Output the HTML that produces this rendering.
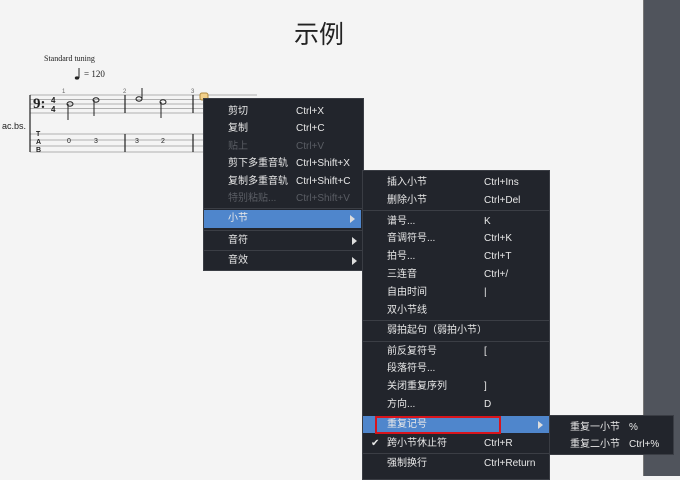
<!DOCTYPE html>
<html><head><meta charset="utf-8"><style>
*{margin:0;padding:0;box-sizing:border-box}
body{width:680px;height:476px;background:#f4f4f4;position:relative;overflow:hidden;font-family:"Liberation Sans","Noto Sans CJK SC",sans-serif}
.panel{position:absolute;left:643px;top:0;width:37px;height:476px;background:#50545c;border-left:1px solid #777}
.title{position:absolute;left:294px;top:15px;font-size:25px;color:#222;font-family:"Noto Sans CJK SC",sans-serif}
.menu{position:absolute;background:#22252c;border:1px solid #3a3d44;color:#e8e8e8;font-size:10px}
.it{position:absolute;height:17px;line-height:17px;left:0;right:0}
.it .a{position:absolute}
.it .b{position:absolute}
.dis{color:#5a5d64}
.hl{background:#4f86cc}
.sep{position:absolute;left:0;right:0;height:1px;background:#3b3e45}
.arr{position:absolute;right:6px;top:5px;width:0;height:0;border-left:5px solid #ddd;border-top:4px solid transparent;border-bottom:4px solid transparent}
</style></head><body>
<div class="panel"></div>
<div class="title">示例</div>
<svg style="position:absolute;left:0;top:0" width="643" height="476">
<text x="44" y="61" font-family="Liberation Serif" font-size="8" fill="#222">Standard tuning</text>
<ellipse cx="77" cy="78" rx="2.2" ry="1.6" fill="#222"/><line x1="79" y1="78" x2="79" y2="68" stroke="#222"/>
<text x="84" y="77" font-family="Liberation Serif" font-size="9" fill="#222">= 120</text>
<g stroke="#999" stroke-width="0.8">
<line x1="30" y1="95" x2="257" y2="95"/><line x1="30" y1="99.5" x2="257" y2="99.5"/><line x1="30" y1="104" x2="257" y2="104"/><line x1="30" y1="108.5" x2="257" y2="108.5"/><line x1="30" y1="113" x2="257" y2="113"/>
<line x1="30" y1="134" x2="257" y2="134"/><line x1="30" y1="140" x2="257" y2="140"/><line x1="30" y1="146" x2="257" y2="146"/><line x1="30" y1="152" x2="257" y2="152"/>
</g>
<g stroke="#222" stroke-width="1.2">
<line x1="30" y1="95" x2="30" y2="152"/><line x1="125" y1="95" x2="125" y2="113"/><line x1="193" y1="95" x2="193" y2="113"/>
<line x1="125" y1="134" x2="125" y2="152"/><line x1="193" y1="134" x2="193" y2="152"/>
</g>
<text x="33" y="108" font-size="15" font-weight="bold" font-family="Liberation Serif" fill="#222">9:</text>
<text x="51" y="103" font-size="8" font-weight="bold" fill="#222">4</text><text x="51" y="112" font-size="8" font-weight="bold" fill="#222">4</text>
<text x="2" y="129" font-size="9" fill="#222">ac.bs.</text>
<text x="62" y="93" font-size="6" fill="#666">1</text><text x="123" y="93" font-size="6" fill="#666">2</text><text x="191" y="93" font-size="6" fill="#666">3</text>
<g fill="none" stroke="#222"><ellipse cx="70" cy="104" rx="3" ry="2.2"/><line x1="68" y1="104" x2="68" y2="120"/>
<ellipse cx="96" cy="100" rx="3" ry="2.2"/><line x1="94" y1="100" x2="94" y2="116"/>
<ellipse cx="139" cy="99" rx="3" ry="2.2"/><line x1="142" y1="99" x2="142" y2="88"/>
<ellipse cx="163" cy="102" rx="3" ry="2.2"/><line x1="161" y1="102" x2="161" y2="118"/></g>
<g font-size="7" fill="#222"><text x="67" y="143">0</text><text x="94" y="143">3</text><text x="135" y="143">3</text><text x="161" y="143">2</text>
<text x="36" y="136" font-weight="bold">T</text><text x="36" y="144" font-weight="bold">A</text><text x="36" y="152" font-weight="bold">B</text></g>
<rect x="200" y="93" width="8" height="7" rx="2" fill="#f2d08a" stroke="#b08a40"/>
</svg>

<div class="menu" style="left:203px;top:98px;width:161px;height:173px">
<div class="it" style="top:4px"><span class="a" style="left:24px">剪切</span><span class="b" style="left:92px">Ctrl+X</span></div>
<div class="it" style="top:21px"><span class="a" style="left:24px">复制</span><span class="b" style="left:92px">Ctrl+C</span></div>
<div class="it dis" style="top:39px"><span class="a" style="left:24px">贴上</span><span class="b" style="left:92px">Ctrl+V</span></div>
<div class="it" style="top:56px"><span class="a" style="left:24px">剪下多重音轨</span><span class="b" style="left:92px">Ctrl+Shift+X</span></div>
<div class="it" style="top:74px"><span class="a" style="left:24px">复制多重音轨</span><span class="b" style="left:92px">Ctrl+Shift+C</span></div>
<div class="it dis" style="top:91px"><span class="a" style="left:24px">特别粘贴...</span><span class="b" style="left:92px">Ctrl+Shift+V</span></div>
<div class="sep" style="top:109px"></div>
<div class="it hl" style="top:111px;height:18px;right:2px"><span class="a" style="left:24px">小节</span><span class="arr"></span></div>
<div class="sep" style="top:131px"></div>
<div class="it" style="top:133px"><span class="a" style="left:24px">音符</span><span class="arr"></span></div>
<div class="sep" style="top:151px"></div>
<div class="it" style="top:153px"><span class="a" style="left:24px">音效</span><span class="arr"></span></div>
</div>

<div class="menu" style="left:362px;top:170px;width:188px;height:310px">
<div class="it" style="top:3px"><span class="a" style="left:24px">插入小节</span><span class="b" style="left:121px">Ctrl+Ins</span></div>
<div class="it" style="top:21px"><span class="a" style="left:24px">删除小节</span><span class="b" style="left:121px">Ctrl+Del</span></div>
<div class="sep" style="top:39px"></div>
<div class="it" style="top:42px"><span class="a" style="left:24px">谱号...</span><span class="b" style="left:121px">K</span></div>
<div class="it" style="top:59px"><span class="a" style="left:24px">音调符号...</span><span class="b" style="left:121px">Ctrl+K</span></div>
<div class="it" style="top:77px"><span class="a" style="left:24px">拍号...</span><span class="b" style="left:121px">Ctrl+T</span></div>
<div class="it" style="top:95px"><span class="a" style="left:24px">三连音</span><span class="b" style="left:121px">Ctrl+/</span></div>
<div class="it" style="top:113px"><span class="a" style="left:24px">自由时间</span><span class="b" style="left:121px">|</span></div>
<div class="it" style="top:131px"><span class="a" style="left:24px">双小节线</span></div>
<div class="sep" style="top:149px"></div>
<div class="it" style="top:151px"><span class="a" style="left:24px">弱拍起句（弱拍小节）</span></div>
<div class="sep" style="top:170px"></div>
<div class="it" style="top:172px"><span class="a" style="left:24px">前反复符号</span><span class="b" style="left:121px">[</span></div>
<div class="it" style="top:189px"><span class="a" style="left:24px">段落符号...</span></div>
<div class="it" style="top:207px"><span class="a" style="left:24px">关闭重复序列</span><span class="b" style="left:121px">]</span></div>
<div class="it" style="top:225px"><span class="a" style="left:24px">方向...</span><span class="b" style="left:121px">D</span></div>
<div class="it hl" style="top:245px;height:17px;right:0"><span class="a" style="left:24px">重复记号</span><span class="arr"></span></div>
<div style="position:absolute;left:12px;top:245px;width:126px;height:18px;border:2px solid #d8141c"></div>
<div class="it" style="top:264px"><span class="a" style="left:8px">✔</span><span class="a" style="left:24px">跨小节休止符</span><span class="b" style="left:121px">Ctrl+R</span></div>
<div class="sep" style="top:282px"></div>
<div class="it" style="top:284px"><span class="a" style="left:24px">强制换行</span><span class="b" style="left:121px">Ctrl+Return</span></div>
</div>

<div class="menu" style="left:549px;top:415px;width:125px;height:40px">
<div class="it" style="top:3px"><span class="a" style="left:20px">重复一小节</span><span class="b" style="left:79px">%</span></div>
<div class="it" style="top:20px"><span class="a" style="left:20px">重复二小节</span><span class="b" style="left:79px">Ctrl+%</span></div>
</div>
</body></html>
